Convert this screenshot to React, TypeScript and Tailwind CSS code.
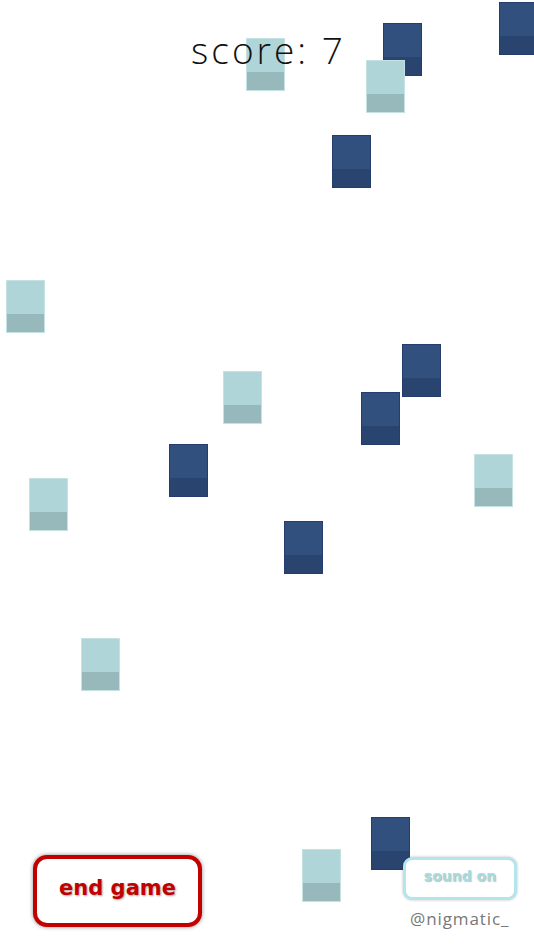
import React from "react";

type Tile = { x: number; y: number; dark: boolean };

const tiles: Tile[] = [
  { x: 246, y: 38, dark: false },
  { x: 383, y: 23, dark: true },
  { x: 366, y: 60, dark: false },
  { x: 499, y: 2, dark: true },
  { x: 332, y: 135, dark: true },
  { x: 6, y: 280, dark: false },
  { x: 402, y: 344, dark: true },
  { x: 223, y: 371, dark: false },
  { x: 361, y: 392, dark: true },
  { x: 474, y: 454, dark: false },
  { x: 169, y: 444, dark: true },
  { x: 29, y: 478, dark: false },
  { x: 284, y: 521, dark: true },
  { x: 81, y: 638, dark: false },
  { x: 371, y: 817, dark: true },
  { x: 302, y: 849, dark: false },
];

function TileBox({ t }: { t: Tile }) {
  return (
    <div
      className={
        t.dark
          ? "absolute w-[39px] h-[53px] flex flex-col border border-[#243d6c]"
          : "absolute w-[39px] h-[53px] flex flex-col border border-[#c4e2e4]"
      }
      style={{ left: t.x, top: t.y }}
    >
      <div className={t.dark ? "h-[33px] bg-[#31507e]" : "h-[33px] bg-[#b0d5d8]"} />
      <div className={t.dark ? "flex-1 bg-[#2a4470]" : "flex-1 bg-[#98b9bb]"} />
    </div>
  );
}

export default function App() {
  return (
    <div className="relative w-[534px] h-[950px] overflow-hidden bg-white">
      {tiles.map((t, i) => (
        <TileBox key={i} t={t} />
      ))}
      <div className="absolute inset-0 flex flex-col justify-between">
        <div className="flex justify-center pt-[24px] pl-[3px]">
          <span className="text-[37px] leading-[52px] font-light tracking-[3px] text-[#111] [font-family:'Open_Sans',sans-serif]">
            score: 7
          </span>
        </div>
        <div className="flex items-start justify-between pl-[33px] pr-[17px] pb-[23px]">
          <div className="w-[169px] h-[72px] rounded-[14px] border-[4px] border-[#c20000] bg-white shadow-[0_0_4px_rgba(0,0,0,0.45)] flex items-center justify-center">
            <span className="text-[21px] font-bold text-[#c20000] [font-family:'DejaVu_Sans',sans-serif] [text-shadow:1px_1px_2px_rgba(0,0,0,0.35)] pb-[4px]">
              end game
            </span>
          </div>
          <div className="flex flex-col items-start mt-[2px] gap-[10px]">
            <div className="w-[114px] h-[43px] rounded-[9px] border-[3px] border-[#b4e5ea] bg-white shadow-[0_0_3px_rgba(0,0,0,0.25)] flex items-center justify-center">
              <span className="text-[14px] font-bold text-[#a6dbe0] [font-family:'DejaVu_Sans',sans-serif] [text-shadow:1px_1px_1px_rgba(0,0,0,0.25)] pb-[4px]">
                sound on
              </span>
            </div>
            <span className="ml-[7px] text-[17px] leading-[17px] text-[#777] tracking-[0.9px] [font-family:'Open_Sans',sans-serif]">
              @nigmatic_
            </span>
          </div>
        </div>
      </div>
    </div>
  );
}
